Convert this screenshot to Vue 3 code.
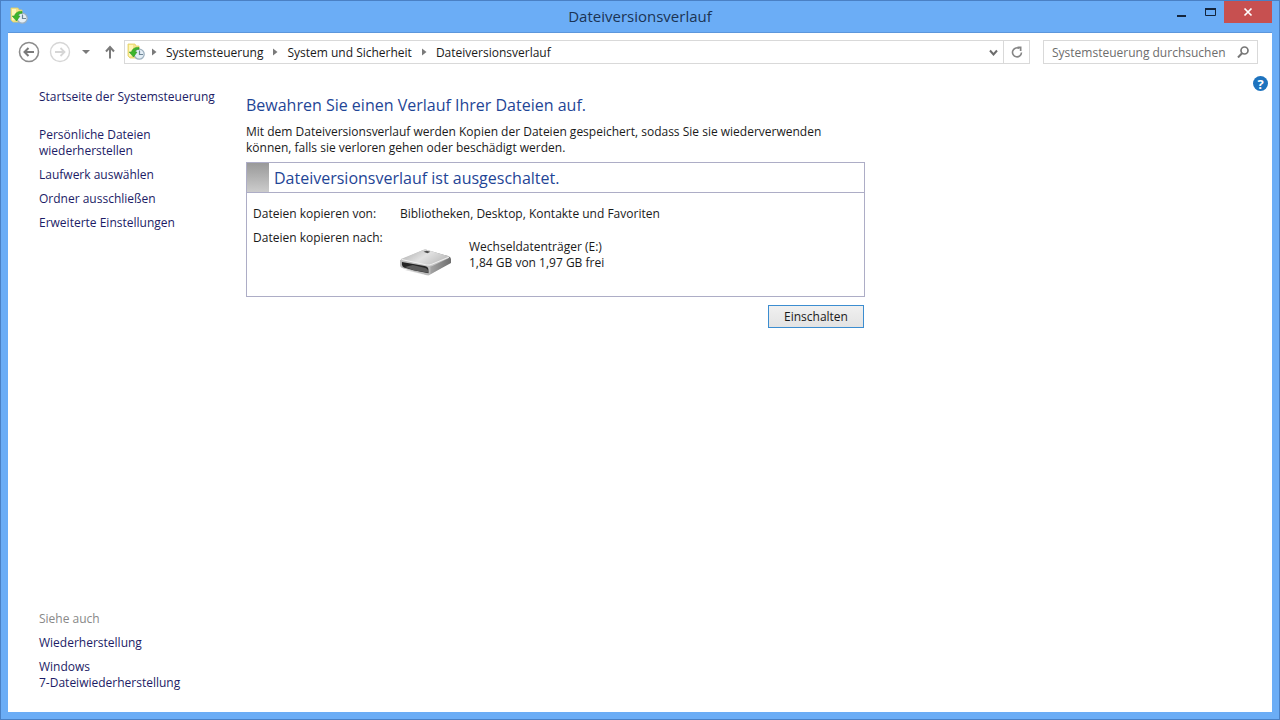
<script setup>
const crumbs = ['Systemsteuerung', 'System und Sicherheit', 'Dateiversionsverlauf']
const tasks = [
  'Persönliche Dateien wiederherstellen',
  'Laufwerk auswählen',
  'Ordner ausschließen',
  'Erweiterte Einstellungen',
]
const related = ['Wiederherstellung', 'Windows\n7-Dateiwiederherstellung']
</script>

<template>
  <div class="window">
    <svg width="0" height="0" class="defs" aria-hidden="true">
      <symbol id="history" viewBox="0 0 18 18">
        <path d="M1 1h7l1 2h3v12H3L1 13z" fill="#f5e68c" stroke="#e3cf63" stroke-width="0.8" />
        <path d="M2 2h4v11H2z" fill="#fff6b8" />
        <circle cx="12.200" cy="11.200" r="5" fill="#e4eef6" stroke="#9db0be" stroke-width="1.300" />
        <path d="M12.500 7.500V11.500H16" fill="none" stroke="#6e8595" stroke-width="1.200" />
        <path d="M12 4.500C8 4 5 6 4.600 9H2.200L6.500 14l3.500-5H8C8.300 7.200 9.800 6 12 6.200z" fill="#3db52c" stroke="#2f9a25" stroke-width="0.600" />
      </symbol>
    </svg>
    <header class="titlebar">
      <svg class="app-icon" viewBox="0 0 18 18"><use href="#history" /></svg>
      <h1>Dateiversionsverlauf</h1>
      <div class="controls">
        <button class="ctl" aria-label="Minimieren">
          <svg width="12" height="12"><path d="M2 9h9v2H2z" fill="#14253c" /></svg>
        </button>
        <button class="ctl" aria-label="Maximieren">
          <svg width="12" height="12"><path d="M1.500 2.500h10v7h-10z" fill="none" stroke="#14253c" /><path d="M1 2h11v2H1z" fill="#14253c" /></svg>
        </button>
        <button class="ctl close" aria-label="Schließen">
          <svg width="10" height="10"><path d="M1.500 1.500l7 7M8.500 1.500l-7 7" stroke="#fff" stroke-width="1.700" /></svg>
        </button>
      </div>
    </header>

    <div class="client">
      <nav class="toolbar" aria-label="Navigation">
        <button class="nav" aria-label="Zurück">
          <svg width="22" height="22" fill="none" stroke="#8c8c8c"><circle cx="11" cy="11" r="9.500" stroke-width="1.600" /><path d="M6.500 11H16M10.500 7l-4 4 4 4" stroke="#7a7a7a" stroke-width="2" /></svg>
        </button>
        <button class="nav" aria-label="Vorwärts" disabled>
          <svg width="22" height="22" fill="none" stroke="#d6d6d6"><circle cx="11" cy="11" r="9.500" stroke-width="1.400" /><path d="M6 11h9.500M11.500 7l4 4-4 4" stroke-width="1.800" /></svg>
        </button>
        <button class="recent" aria-label="Zuletzt besuchte Seiten">
          <svg width="8" height="4"><path d="M0 0h8L4 4z" fill="#7a7a7a" /></svg>
        </button>
        <button class="up" aria-label="Nach oben">
          <svg width="12" height="14" fill="none" stroke="#7a7a7a" stroke-width="2"><path d="M6 13.500V2M2 6.500L6 2l4 4.500" /></svg>
        </button>
        <div class="address">
          <svg class="path-icon" viewBox="0 0 18 18"><use href="#history" /></svg>
          <template v-for="c in crumbs" :key="c">
            <svg class="sep" width="5" height="8"><path d="M0 0.500v7L4.500 4z" fill="#7a7a7a" /></svg>
            <a href="#">{{ c }}</a>
          </template>
          <button class="drop" aria-label="Verlauf anzeigen">
            <svg width="9" height="7" fill="none" stroke="#6c6c6c" stroke-width="2"><path d="M1 1.500l3.500 4 3.500-4" /></svg>
          </button>
          <button class="refresh" aria-label="Aktualisieren">
            <svg width="12" height="12" fill="none" stroke="#858585" stroke-width="1.600"><path d="M8 2.300A4.500 4.500 0 1 0 10.500 6.500" /><path d="M6.500 0.500H10.500V5H8.800V2.500H6.500z" fill="#858585" stroke="none" /></svg>
          </button>
        </div>
        <div class="search">
          <input type="text" placeholder="Systemsteuerung durchsuchen" aria-label="Systemsteuerung durchsuchen">
          <svg width="12" height="12" fill="none" stroke="#777"><circle cx="7.500" cy="4.500" r="3.500" stroke-width="1.700" /><path d="M5 7.200L1 11.500" stroke-width="2" /></svg>
        </div>
      </nav>

      <div class="body">
        <aside class="sidebar">
          <a href="#" class="home">Startseite der Systemsteuerung</a>
          <ul>
            <li v-for="t in tasks" :key="t"><a href="#">{{ t }}</a></li>
          </ul>
          <div class="related">
            <h2>Siehe auch</h2>
            <ul>
              <li v-for="r in related" :key="r"><a href="#">{{ r }}</a></li>
            </ul>
          </div>
        </aside>

        <main>
          <h2>Bewahren Sie einen Verlauf Ihrer Dateien auf.</h2>
          <p class="intro">Mit dem Dateiversionsverlauf werden Kopien der Dateien gespeichert, sodass Sie sie wiederverwenden können, falls sie verloren gehen oder beschädigt werden.</p>
          <section class="status">
            <div class="status-head">
              <span class="marker"></span>
              <h3>Dateiversionsverlauf ist ausgeschaltet.</h3>
            </div>
            <dl>
              <dt>Dateien kopieren von:</dt>
              <dd>Bibliotheken, Desktop, Kontakte und Favoriten</dd>
              <dt>Dateien kopieren nach:</dt>
              <dd class="drive">
                <svg width="51" height="28" viewBox="0 0 52 28">
                  <defs>
                    <linearGradient id="top" x1="0" y1="0" x2="1" y2="0.500"><stop offset="0" stop-color="#a8a8a8" /><stop offset="0.550" stop-color="#e2e2e2" /><stop offset="1" stop-color="#bdbdbd" /></linearGradient>
                    <linearGradient id="side" x1="0" y1="0" x2="1" y2="0"><stop offset="0" stop-color="#dedede" /><stop offset="0.600" stop-color="#a4a4a4" /><stop offset="1" stop-color="#6e6e6e" /></linearGradient>
                  </defs>
                  <path d="M4 22L29 28l21-13v-4L30 24z" fill="#d8d8d8" />
                  <path d="M0 12L23 2q2-1 4-.5L49 8q3 1 3 3v4L32 26q-2 1.500-5 1L3 20q-3-1-3-4z" fill="url(#side)" />
                  <path d="M1 11L23 2q2-1 4-.5L49 8q2 1 0 2.500L33 18q-2 1-5 .5L2 13z" fill="url(#top)" />
                  <path d="M0 12q1 0 3 .5L28 17q3 .5 3 3v6q-1 1.500-4 1L3 20.500q-3-1-3-4z" fill="#bdbdbd" />
                  <path d="M2 14l23 4q4 .7 4 4v3.500L14 22.500 4 19.500q-2-1-2-3z" fill="#252525" />
                  <path d="M5 19l8-2 13 3q3 1 3 5L14 22.500z" fill="#5c5c5c" />
                  <path d="M24 3.500l3-1 4 1-3 1.500z" fill="#4b4b4b" />
                  <path d="M2 11.500L27 17q3 .5 5-.5L50 9" fill="none" stroke="#f1f1f1" />
                </svg>
                <div>Wechseldatenträger (E:)<br>1,84 GB von 1,97 GB frei</div>
              </dd>
            </dl>
          </section>
          <div class="actions"><button class="primary">Einschalten</button></div>
        </main>

        <button class="help" aria-label="Hilfe">?</button>
      </div>
    </div>
  </div>
</template>

<style>
body {
  margin: 0;
}
</style>

<style scoped>
.window {
  box-sizing: border-box;
  min-height: 100vh;
  display: flex;
  flex-direction: column;
  padding: 0 7px 7px;
  border: 1px solid #4a80c4;
  background: #6badf6;
  font: 12px/16px "Open Sans", "Noto Sans", sans-serif;
  color: #1a1a1a;
}
.defs {
  position: absolute;
}
button {
  display: flex;
  align-items: center;
  justify-content: center;
  padding: 0;
  border: 0;
  background: none;
  font: inherit;
  color: inherit;
}
a {
  color: inherit;
  text-decoration: none;
}
h1, h2, h3, ul, dl, dd, p {
  margin: 0;
  padding: 0;
  font-weight: normal;
  list-style: none;
}
.titlebar {
  display: grid;
  grid-template-columns: 1fr auto 1fr;
  height: 31px;
}
.app-icon {
  width: 18px;
  height: 18px;
  margin: 6px 0 0 2px;
}
.titlebar h1 {
  font-size: 15px;
  line-height: 31px;
  color: #1b3454;
}
.controls {
  display: flex;
  justify-content: flex-end;
  align-items: flex-start;
}
.ctl {
  width: 29px;
  height: 22px;
}
.close {
  width: 48px;
  background: #c75050;
}
.client {
  flex: 1;
  display: flex;
  flex-direction: column;
  border-top: 1px solid #5c97dc;
  background: #fff;
}
.toolbar {
  display: flex;
  align-items: center;
  height: 24px;
  padding: 7px 14px 0 10px;
}
.nav {
  width: 22px;
  margin-right: 9px;
}
.recent {
  width: 12px;
}
.up {
  width: 12px;
  margin: 0 8px 0 12px;
}
.address, .search {
  box-sizing: border-box;
  display: flex;
  align-items: center;
  height: 24px;
  border: 1px solid #d9d9d9;
}
.address {
  flex: 1;
}
.address a, .search input {
  padding: 2px 0 0;
}
.path-icon {
  width: 18px;
  height: 18px;
  margin-left: 2px;
}
.sep {
  margin: 0 9px 0 10px;
}
.path-icon + .sep {
  margin-left: 7px;
}
.drop {
  width: 20px;
  height: 22px;
  margin-left: auto;
}
.refresh {
  width: 26px;
  height: 22px;
  border-left: 1px solid #d9d9d9;
}
.search {
  width: 215px;
  margin-left: 13px;
  padding: 0 8px;
}
.search input {
  flex: 1;
  min-width: 0;
  border: 0;
  outline: 0;
  background: none;
  font: inherit;
}
.search input::placeholder {
  color: #6d6d6d;
  opacity: 1;
}
.body {
  flex: 1;
  display: flex;
  align-items: stretch;
}
.sidebar {
  width: 176px;
  display: flex;
  flex-direction: column;
  padding: 25px 31px 21px;
  color: #1c1c66;
}
.home {
  margin-bottom: 22px;
  white-space: nowrap;
}
.sidebar li {
  margin-bottom: 8px;
  white-space: pre-line;
}
.sidebar ul:first-of-type li:first-child {
  max-width: 130px;
}
.related {
  margin-top: auto;
}
.related h2 {
  margin-bottom: 8px;
  font-size: 12px;
  line-height: 17px;
  color: #888;
}
.related li:last-child {
  margin-bottom: 0;
}
main {
  flex: 0 1 619px;
  padding-top: 31px;
}
main h2 {
  font-size: 16px;
  line-height: 20px;
  color: #1f4596;
}
.intro {
  margin: 9px 0 6px;
}
.status {
  border: 1px solid #adadc6;
}
.status-head {
  display: flex;
  height: 29px;
  border-bottom: 1px solid #adadc6;
}
.marker {
  width: 22px;
  background: linear-gradient(#999, #ccc);
}
.status h3 {
  margin-left: 5px;
  font-size: 16px;
  line-height: 31px;
  color: #1f4596;
}
dl {
  display: grid;
  grid-template-columns: 147px 1fr;
  row-gap: 8px;
  padding: 13px 6px 20px;
}
.drive {
  display: flex;
  align-items: flex-start;
  gap: 18px;
  padding-top: 9px;
}
.drive svg {
  margin-top: 9px;
}
.actions {
  display: flex;
  justify-content: flex-end;
  padding: 8px 1px 0 0;
}
.primary {
  width: 96px;
  height: 23px;
  border: 1px solid #3c8dd0;
  background: linear-gradient(#f0f0f0, #e3e3e3);
}
.help {
  width: 15px;
  height: 15px;
  margin: 12px 4px 0 auto;
  border-radius: 50%;
  background: #1e73be;
  color: #fff;
  font-size: 13px;
  font-weight: bold;
}
</style>
